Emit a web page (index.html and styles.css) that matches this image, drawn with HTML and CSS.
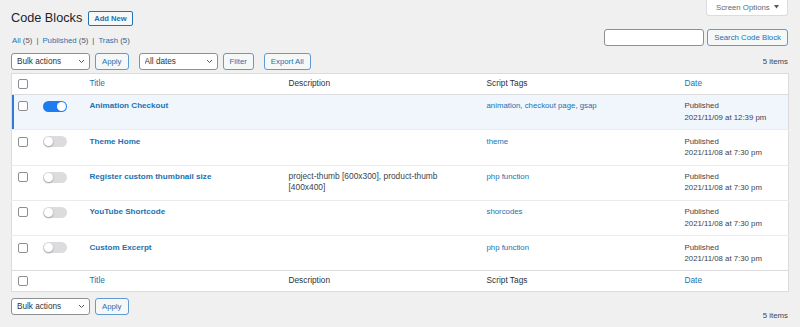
FILE: index.html
```html
<!DOCTYPE html>
<html lang="en">
  <head>
    <meta charset="UTF-8" />
    <meta name="viewport" content="width=device-width, initial-scale=1.0" />
    <title>Code Blocks</title>
    <link rel="stylesheet" href="styles.css">
  </head>
  <body>
    <div class="wrap">
      <div class="screen-meta-links">
        <button class="screen-options">Screen Options
          <svg class="tri" width="5" height="4" viewBox="0 0 5 4"><path d="M0 0h5L2.5 3.5z" fill="#50575e"/></svg>
        </button>
      </div>

      <div class="page-head">
        <h1>Code Blocks</h1>
        <a href="#" class="add-new">Add New</a>
      </div>

      <div class="filter-row">
        <ul class="subsubsub">
          <li><a href="#">All</a> <span class="count">(5)</span><span class="sep">|</span></li>
          <li><a href="#">Published</a> <span class="count">(5)</span><span class="sep">|</span></li>
          <li><a href="#">Trash</a> <span class="count">(5)</span></li>
        </ul>
        <form class="search-box">
          <input type="search" class="search-input" />
          <button class="button">Search Code Block</button>
        </form>
      </div>

      <div class="tablenav top">
        <div class="select-wrap">
          <select class="select"><option>Bulk actions</option></select>
          <svg class="chev" width="7" height="5" viewBox="0 0 7 5"><path d="M1 1l2.5 2.5L6 1" fill="none" stroke="#50575e" stroke-width="1"/></svg>
        </div>
        <button class="button">Apply</button>
        <div class="select-wrap gap-left">
          <select class="select"><option>All dates</option></select>
          <svg class="chev" width="7" height="5" viewBox="0 0 7 5"><path d="M1 1l2.5 2.5L6 1" fill="none" stroke="#50575e" stroke-width="1"/></svg>
        </div>
        <button class="button">Filter</button>
        <button class="button gap-left">Export All</button>
        <div class="displaying-num">5 items</div>
      </div>

      <table class="list-table">
        <thead>
          <tr>
            <th class="check-column"><input type="checkbox" class="cb" /></th>
            <th class="toggle-column"></th>
            <th class="title-column"><a href="#">Title</a></th>
            <th class="desc-column">Description</th>
            <th class="tags-column">Script Tags</th>
            <th class="date-column"><a href="#">Date</a></th>
          </tr>
        </thead>
        <tbody>
          <tr class="active">
            <td class="check-column"><input type="checkbox" class="cb" /></td>
            <td><span class="toggle on"><span class="knob"></span></span></td>
            <td><a href="#" class="row-title">Animation Checkout</a></td>
            <td class="desc"></td>
            <td><a href="#">animation</a>, <a href="#">checkout page</a>, <a href="#">gsap</a></td>
            <td>Published<br>2021/11/09 at 12:39 pm</td>
          </tr>
          <tr>
            <td class="check-column"><input type="checkbox" class="cb" /></td>
            <td><span class="toggle"><span class="knob"></span></span></td>
            <td><a href="#" class="row-title">Theme Home</a></td>
            <td class="desc"></td>
            <td><a href="#">theme</a></td>
            <td>Published<br>2021/11/08 at 7:30 pm</td>
          </tr>
          <tr>
            <td class="check-column"><input type="checkbox" class="cb" /></td>
            <td><span class="toggle"><span class="knob"></span></span></td>
            <td><a href="#" class="row-title">Register custom thumbnail size</a></td>
            <td class="desc">project-thumb [600x300], product-thumb [400x400]</td>
            <td><a href="#">php function</a></td>
            <td>Published<br>2021/11/08 at 7:30 pm</td>
          </tr>
          <tr>
            <td class="check-column"><input type="checkbox" class="cb" /></td>
            <td><span class="toggle"><span class="knob"></span></span></td>
            <td><a href="#" class="row-title">YouTube Shortcode</a></td>
            <td class="desc"></td>
            <td><a href="#">shorcodes</a></td>
            <td>Published<br>2021/11/08 at 7:30 pm</td>
          </tr>
          <tr>
            <td class="check-column"><input type="checkbox" class="cb" /></td>
            <td><span class="toggle"><span class="knob"></span></span></td>
            <td><a href="#" class="row-title">Custom Excerpt</a></td>
            <td class="desc"></td>
            <td><a href="#">php function</a></td>
            <td>Published<br>2021/11/08 at 7:30 pm</td>
          </tr>
        </tbody>
        <tfoot>
          <tr>
            <th class="check-column"><input type="checkbox" class="cb" /></th>
            <th></th>
            <th><a href="#">Title</a></th>
            <th>Description</th>
            <th>Script Tags</th>
            <th><a href="#">Date</a></th>
          </tr>
        </tfoot>
      </table>

      <div class="tablenav bottom">
        <div class="select-wrap">
          <select class="select"><option>Bulk actions</option></select>
          <svg class="chev" width="7" height="5" viewBox="0 0 7 5"><path d="M1 1l2.5 2.5L6 1" fill="none" stroke="#50575e" stroke-width="1"/></svg>
        </div>
        <button class="button">Apply</button>
        <div class="displaying-num">5 items</div>
      </div>
    </div>
  </body>
</html>
```

FILE: styles.css
```css
* {
  box-sizing: border-box;
}
body {
  margin: 0;
  background: #f0f0f1;
  font-family: "Liberation Sans", Arial, sans-serif;
  font-size: 7.8px;
  line-height: 11.4px;
  color: #3c434a;
}
a {
  color: #2271b1;
  text-decoration: none;
}
.wrap {
  padding: 0 12px 0 11px;
}

/* screen options tab */
.screen-meta-links {
  float: right;
}
.screen-options {
  display: flex;
  align-items: center;
  gap: 4px;
  width: 82px;
  height: 16px;
  padding: 0 0 1px 9px;
  background: #fff;
  border: 1px solid #dcdcde;
  border-top: none;
  border-radius: 0 0 3px 3px;
  font-family: inherit;
  font-size: 7.8px;
  color: #646970;
}

/* heading */
.page-head {
  display: flex;
  align-items: center;
  gap: 6px;
  padding-top: 11px;
}
h1 {
  margin: 0;
  font-size: 12.7px;
  font-weight: 400;
  line-height: 15px;
  color: #1d2327;
}
.add-new {
  display: block;
  height: 15px;
  padding: 0 5px;
  border: 1px solid #2271b1;
  border-radius: 2px;
  background: #f6f7f7;
  font-weight: 700;
  font-size: 7.6px;
  line-height: 13px;
}

/* status links + search */
.filter-row {
  display: flex;
  justify-content: space-between;
  align-items: flex-end;
  margin-top: 3px;
}
.subsubsub {
  display: flex;
  margin: 0 0 0 1px;
  padding: 0;
  list-style: none;
  line-height: 10px;
}
.count {
  color: #50575e;
}
.sep {
  padding: 0 4px;
  color: #50575e;
}
.search-box {
  display: flex;
  gap: 3px;
  margin: 0;
}
.search-input {
  width: 100px;
  height: 17px;
  margin: 0;
  border: 1px solid #8c8f94;
  border-radius: 3px;
  background: #fff;
}
.button {
  height: 17px;
  margin: 0;
  padding: 0 6px;
  background: #f6f7f7;
  border: 1px solid #5f9bd3;
  border-radius: 3px;
  font-family: inherit;
  font-size: 7.8px;
  line-height: 15px;
  color: #2271b1;
}

/* table nav */
.tablenav {
  display: flex;
  align-items: center;
  gap: 5px;
}
.tablenav.top {
  margin-top: 7px;
}
.tablenav.bottom {
  align-items: flex-start;
  margin-top: 6px;
}
.tablenav .gap-left {
  margin-left: 5px;
}
.displaying-num {
  margin-left: auto;
  color: #3c434a;
}
.tablenav.bottom .displaying-num {
  margin-top: 12px;
}
.select-wrap {
  position: relative;
  width: 79px;
  height: 17px;
}
.select {
  appearance: none;
  width: 100%;
  height: 100%;
  margin: 0;
  padding: 0 0 0 5px;
  background: #fff;
  border: 1px solid #8c8f94;
  border-radius: 3px;
  font-family: inherit;
  font-size: 8.2px;
  color: #2c3338;
}
.chev {
  position: absolute;
  right: 5px;
  top: 6px;
  pointer-events: none;
}

/* list table */
.list-table {
  width: 777px;
  margin-top: 3px;
  border-collapse: collapse;
  table-layout: fixed;
  background: #fff;
  border: 1px solid #dcdcde;
}
.list-table th,
.list-table td {
  padding: 5.5px 8px 6px;
  text-align: left;
  vertical-align: top;
  font-weight: 400;
}
.list-table th {
  padding: 4px 8px 4.5px;
  font-size: 8.3px;
  color: #2c3338;
}
.list-table thead th {
  border-bottom: 1px solid #dcdcde;
}
.list-table tfoot th {
  border-top: 1px solid #dcdcde;
}
.list-table tbody td {
  border-top: 1px solid #ebebed;
}
.list-table tbody tr:first-child td {
  border-top: none;
}
.list-table .check-column {
  width: 24px;
  padding-left: 6px;
  padding-right: 0;
}
.toggle-column {
  width: 46px;
}
.list-table tbody td:nth-child(2) {
  padding-left: 7px;
  padding-right: 0;
}
.title-column {
  width: 199px;
}
.desc-column,
.tags-column {
  width: 198px;
}
.date-column {
  width: 112px;
}
.list-table td.desc {
  font-size: 8.4px;
}
.list-table tr.active td {
  background: #f0f6fc;
}
.list-table tr.active td:first-child {
  box-shadow: inset 2px 0 0 #2f7bd6;
}
.row-title {
  font-weight: 700;
  font-size: 8.1px;
}

/* checkbox */
.cb {
  appearance: none;
  display: block;
  width: 10px;
  height: 10px;
  margin: 1px 0 0;
  background: #fff;
  border: 1px solid #8c8f94;
  border-radius: 2px;
}

/* toggle switch */
.toggle {
  display: flex;
  align-items: center;
  width: 24px;
  height: 11px;
  margin-top: 0.5px;
  padding: 1px;
  border-radius: 6px;
  background: #dcdcde;
}
.toggle.on {
  justify-content: flex-end;
  background: #1c7cf0;
}
.knob {
  width: 9px;
  height: 9px;
  border-radius: 50%;
  background: #fff;
  box-shadow: 0 1px 2px rgba(0, 0, 0, 0.3);
}
.toggle.on .knob {
  box-shadow: none;
}
```
